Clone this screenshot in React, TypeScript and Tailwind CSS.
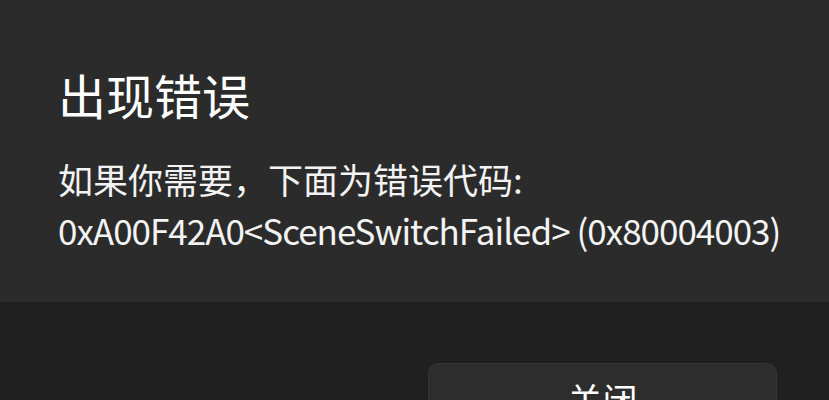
export default function App() {
  return (
    <div
      className="w-[829px] h-[400px] overflow-hidden flex flex-col bg-[#202020] text-white"
      style={{ fontFamily: '"Noto Sans CJK SC", "Noto Sans", sans-serif' }}
    >
      {/* Content */}
      <div className="h-[302px] shrink-0 bg-[#2b2b2b] pl-[58px] pt-[62px]">
        <h1 className="text-[48px] leading-[64px] font-normal">出现错误</h1>
        <div className="mt-[27px] text-[35px] leading-[51px] text-[#f3f3f3] whitespace-nowrap">
          <p>如果你需要，下面为错误代码:</p>
          <p className="tracking-[-1px]">0xA00F42A0&lt;SceneSwitchFailed&gt; (0x80004003)</p>
        </div>
      </div>

      {/* Footer */}
      <div className="flex-1 flex justify-end pt-[61px] pr-[52px]">
        <button className="w-[349px] h-[72px] shrink-0 rounded-[10px] bg-[#2d2d2d] border border-[#353535] text-[35px] leading-[46px] text-white flex justify-center pt-[12px]">
          关闭
        </button>
      </div>
    </div>
  );
}
